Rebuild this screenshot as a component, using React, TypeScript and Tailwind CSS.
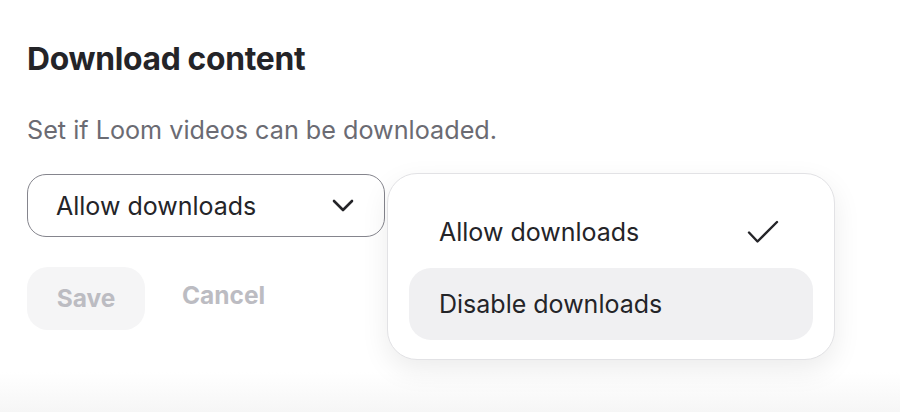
import React from "react";

export default function App() {
  return (
    <div className="relative w-[900px] h-[412px] overflow-hidden bg-white" style={{ fontFamily: "Inter, 'Noto Sans', sans-serif" }}>
      <div className="absolute left-0 right-0 bottom-0 h-[40px] bg-gradient-to-b from-white to-[#f6f6f6]" />
      <div className="relative pl-[27px] pt-[41px] flex flex-col">
        <h1 className="text-[31.8px] leading-[36px] font-bold text-[#242428] tracking-[-0.3px]">Download content</h1>
        <p className="mt-[38px] text-[25.2px] leading-[30px] text-[#6b6b73]">Set if Loom videos can be downloaded.</p>
        <div className="mt-[29px] flex">
          <button className="w-[358px] h-[63px] rounded-[19px] border-[1.5px] border-[#85858d] flex items-center justify-between pl-[28px] pr-[30px] bg-white">
            <span className="text-[25px] leading-[30px] text-[#242428]">Allow downloads</span>
            <svg width="22" height="13" viewBox="0 0 22 13" fill="none">
              <path d="M2 2l9 9 9-9" stroke="#242428" strokeWidth="2.6" strokeLinecap="round" strokeLinejoin="round" />
            </svg>
          </button>
        </div>
        <div className="mt-[30px] flex items-center gap-[37px]">
          <button className="w-[118px] h-[63px] rounded-[21px] bg-[#f5f5f6] text-[24.5px] font-bold text-[#bcbcc2]">Save</button>
          <button className="text-[24.5px] font-bold text-[#bcbcc2] -mt-[6px]">Cancel</button>
        </div>
      </div>
      <div className="absolute left-[387px] top-[173px] w-[448px] h-[187px] rounded-[30px] bg-white border border-[#e2e2e5] shadow-[0_10px_28px_rgba(0,0,0,0.08)] px-[21px] pt-[22px] flex flex-col">
        <div className="h-[72px] rounded-[22px] flex items-center justify-between pl-[30px] pr-[34px]">
          <span className="text-[25px] leading-[30px] text-[#242428]">Allow downloads</span>
          <svg width="32" height="24" viewBox="0 0 32 24" fill="none">
            <path d="M2 12.5l8.5 9L30 2" stroke="#242428" strokeWidth="2.4" strokeLinecap="round" strokeLinejoin="round" />
          </svg>
        </div>
        <div className="h-[72px] rounded-[22px] bg-[#f0f0f2] flex items-center pl-[30px]">
          <span className="text-[25px] leading-[30px] text-[#242428]">Disable downloads</span>
        </div>
      </div>
    </div>
  );
}
